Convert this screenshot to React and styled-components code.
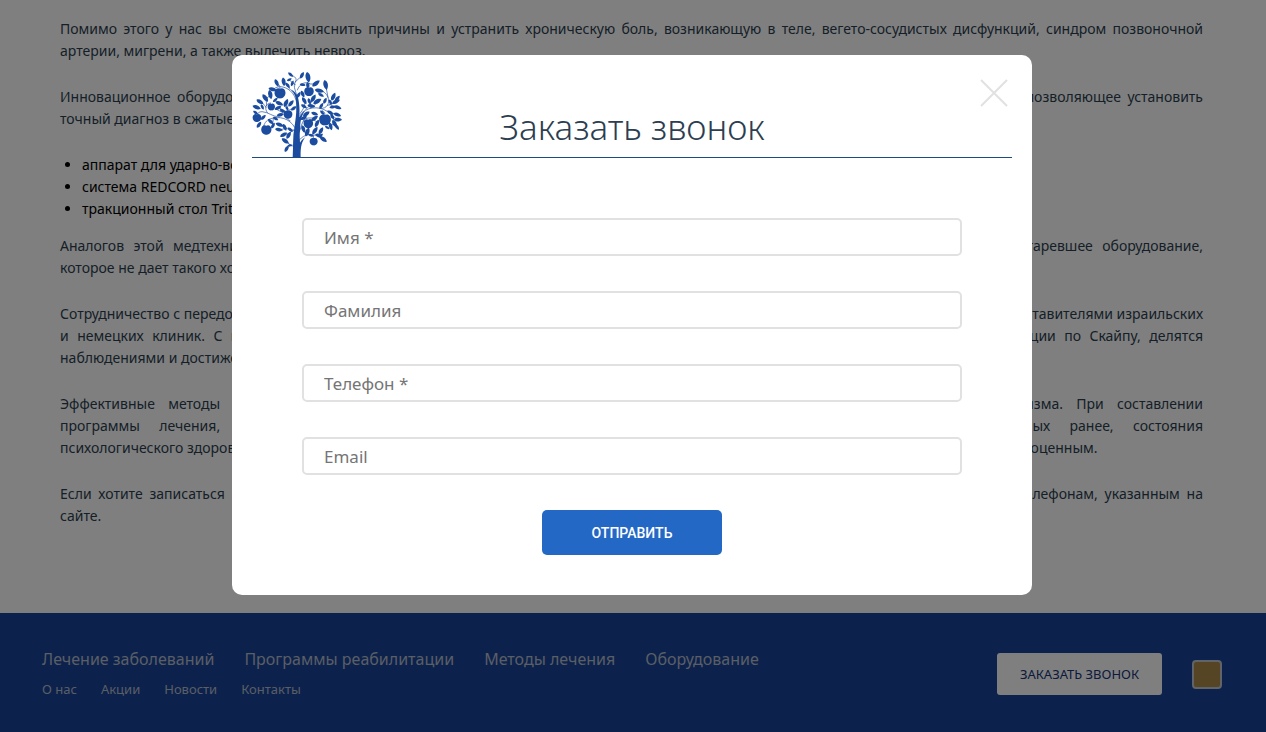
import styled, { createGlobalStyle } from "styled-components";

const GlobalStyle = createGlobalStyle`
	* {
		box-sizing: border-box;
	}

	body {
		margin: 0;
		background-color: white;
		font-family: "Noto Sans", "Open Sans", sans-serif;
	}
`;

const Page = styled.div`
	display: flex;
	flex-direction: column;
	height: 100vh;
	overflow: hidden;
`;

const Article = styled.main`
	flex: 1;
	display: flex;
	flex-direction: column;
	gap: 24px;
	padding: 18px 63px 0 60px;
	font-size: 14px;
	line-height: 22px;
	color: #2c3e50;
`;

const Paragraph = styled.p`
	margin: 0;
`;

const Line = styled.span`
	display: block;
	white-space: nowrap;
	text-align: justify;
	text-align-last: ${(props) => (props.$last ? "left" : "justify")};
`;

const ListBlock = styled.div`
	display: flex;
	flex-direction: column;
	gap: 15px;
`;

const List = styled.ul`
	margin: 0;
	padding-left: 22px;
	color: black;
`;

const Footer = styled.footer`
	display: flex;
	justify-content: space-between;
	align-items: flex-start;
	padding: 35px 44px 32px 42px;
	background-color: #18449a;
`;

const FooterNav = styled.nav`
	display: flex;
	flex-direction: column;
	gap: 8px;
`;

const LinkRow = styled.div`
	display: flex;
	gap: ${(props) => (props.$small ? "24px" : "30px")};
	font-size: ${(props) => (props.$small ? "13px" : "16px")};
	line-height: 22px;
`;

const FooterLink = styled.a`
	color: #b4bccb;
	text-decoration: none;
	white-space: nowrap;
`;

const FooterActions = styled.div`
	display: flex;
	align-items: center;
	gap: 30px;
	padding-top: 5px;
`;

const CallButton = styled.button`
	width: 165px;
	height: 42px;
	padding: 0;
	border: none;
	border-radius: 3px;
	background-color: white;
	color: #18357a;
	font-family: inherit;
	font-size: 13px;
	white-space: nowrap;
`;

const SquareButton = styled.button`
	width: 30px;
	height: 29px;
	padding: 0;
	border: 2px solid #c0c8d0;
	border-radius: 4px;
	background-color: #aa8b4a;
`;

const Overlay = styled.div`
	position: fixed;
	inset: 0;
	display: flex;
	justify-content: center;
	align-items: flex-start;
	padding: 55px 2px 0 0;
	background-color: rgba(0, 0, 0, 0.5);
`;

const Modal = styled.section`
	position: relative;
	width: 100%;
	max-width: 800px;
	padding: 17px 20px 40px;
	border-radius: 10px;
	background-color: white;
`;

const ModalHeader = styled.header`
	display: grid;
	grid-template-columns: 90px 1fr 90px;
	align-items: end;
	border-bottom: 1px solid #1f4a7d;
`;

const ModalTitle = styled.h2`
	margin: 0;
	padding-bottom: 6px;
	text-align: center;
	font-size: 35px;
	line-height: 48px;
	font-weight: 300;
	color: #2c3e50;
`;

const CloseButton = styled.button`
	position: absolute;
	top: 24px;
	right: 24px;
	display: flex;
	padding: 0;
	border: none;
	background: none;
`;

const Form = styled.form`
	display: flex;
	flex-direction: column;
	align-items: center;
	gap: 35px;
	padding: 60px 50px 0;
`;

const Field = styled.input`
	width: 100%;
	height: 38px;
	padding: 0 20px;
	border: 2px solid #e1e1e1;
	border-radius: 5px;
	font-family: inherit;
	font-size: 17px;

	&::placeholder {
		color: #757575;
	}
`;

const SubmitButton = styled.button`
	width: 180px;
	height: 45px;
	border: none;
	border-radius: 5px;
	background-color: #2468c6;
	color: white;
	font-family: Roboto, sans-serif;
	font-size: 14px;
	font-weight: 500;
`;

const TreeSvg = styled.svg`
	display: block;
	width: 90px;
	height: 85px;
`;

const apples = [
	[120, 102, 15],
	[207, 97, 13],
	[94, 143, 10],
	[144, 166, 12],
	[51, 176, 12],
	[79, 212, 14],
	[205, 193, 13],
	[255, 182, 16],
	[221, 247, 11],
];

// x, y, angle, length
const leaves = [
	[152, 46, 40, 20],
	[186, 48, -62, 22],
	[148, 61, -25, 16],
	[157, 72, -70, 18],
	[131, 67, 82, 26],
	[110, 71, 65, 24],
	[98, 90, 15, 26],
	[143, 78, 50, 20],
	[188, 76, 10, 18],
	[204, 54, 80, 32],
	[203, 78, 85, 20],
	[228, 72, -38, 28],
	[238, 94, 12, 28],
	[257, 77, 78, 30],
	[243, 107, 30, 20],
	[188, 104, 65, 22],
	[176, 107, -60, 20],
	[280, 112, -65, 26],
	[292, 118, -50, 22],
	[271, 128, 60, 18],
	[288, 127, -25, 26],
	[293, 144, 20, 24],
	[278, 143, -10, 20],
	[255, 124, -65, 20],
	[220, 117, -60, 26],
	[193, 124, 60, 24],
	[208, 126, 70, 20],
	[232, 126, -30, 28],
	[214, 140, 10, 24],
	[192, 141, 30, 20],
	[244, 140, -60, 20],
	[91, 106, 78, 28],
	[76, 116, 55, 28],
	[60, 127, 30, 24],
	[50, 144, 20, 26],
	[67, 143, 65, 18],
	[106, 122, -40, 18],
	[118, 132, 25, 26],
	[114, 146, -25, 22],
	[138, 131, -65, 26],
	[153, 132, -50, 24],
	[161, 147, -35, 20],
	[128, 155, 30, 20],
	[121, 166, -12, 22],
	[141, 147, 60, 16],
	[47, 160, 35, 18],
	[70, 174, -45, 20],
	[57, 196, -55, 22],
	[92, 187, 45, 22],
	[99, 199, -60, 20],
	[119, 196, 20, 26],
	[117, 211, 10, 24],
	[134, 204, 65, 22],
	[131, 226, -30, 24],
	[146, 228, -60, 24],
	[151, 211, 40, 20],
	[107, 178, 30, 18],
	[136, 245, 35, 26],
	[140, 268, -60, 22],
	[150, 258, -10, 16],
	[191, 176, -25, 22],
	[224, 177, -35, 24],
	[199, 164, -35, 24],
	[224, 163, 20, 22],
	[231, 192, -65, 24],
	[190, 209, 70, 24],
	[202, 218, -70, 28],
	[225, 214, -55, 26],
	[243, 214, -60, 24],
	[236, 228, 15, 22],
	[250, 240, 35, 26],
	[242, 229, -40, 18],
	[213, 228, 20, 18],
	[271, 160, 30, 22],
	[292, 166, 20, 24],
	[277, 172, 60, 20],
	[294, 181, 0, 24],
	[284, 193, 60, 26],
	[272, 201, 75, 24],
	[291, 203, 55, 20],
	[247, 160, 45, 18],
	[262, 205, 30, 16],
];

const branches = [
	"M171 150C174 108 148 84 122 82C110 82 104 86 100 91",
	"M172 118C168 92 158 84 166 68C172 57 165 52 155 48M166 68C174 58 180 56 186 50",
	"M172 92C180 70 198 66 212 74L225 74M207 84V72",
	"M166 76C158 72 154 66 148 62M150 90C142 80 136 72 131 68",
	"M120 88C122 78 114 74 110 70",
	"M178 168C198 142 236 140 258 154C276 164 284 178 284 196",
	"M240 147C262 150 270 130 264 114C258 100 248 94 238 94M264 114L258 82",
	"M262 138C274 138 280 130 288 127M268 134C278 142 286 144 292 144",
	"M180 162C190 150 196 140 194 124M198 150C210 140 214 128 220 117M210 146C222 142 228 134 232 126",
	"M164 204C148 176 118 170 92 178C78 182 72 194 70 204",
	"M118 173C96 172 86 158 66 157C56 157 52 162 50 170",
	"M82 160C72 146 78 132 92 131M78 144C72 134 66 130 60 127M80 138L78 118L91 108",
	"M150 184C138 180 134 170 142 156C146 144 140 140 138 131M142 156C150 150 156 148 161 147",
	"M134 154L118 146M128 160L110 150",
	"M163 214C148 206 136 208 117 211M160 212C150 222 142 226 131 226M140 208L134 198M100 177L98 196",
	"M180 212C186 190 192 176 206 176L224 176M206 182C214 178 224 182 231 188M190 186L199 166",
	"M178 242C194 222 214 224 236 230L250 240M204 226L202 212M216 226L226 214M234 230L243 216M220 238V228",
	"M162 262C152 254 146 262 140 268M154 259L138 246",
	"M268 158L292 166M278 170L294 181M284 188L272 201M255 170C256 160 252 156 247 154",
];

function Tree() {
	return (
		<TreeSvg viewBox="36 38 270 255" aria-hidden="true">
			<g fill="#1b4c9f">
				<path d="M158 294C160 262 158 232 163 205C167 180 171 154 168 124C167 108 160 98 150 90C166 96 174 108 176 124C180 150 178 158 178 174C181 166 188 159 196 154C182 170 181 188 180 214C178 230 180 242 180 250C184 243 190 238 196 234C184 248 181 268 182 294Z" />
				{apples.map(([x, y, r]) => (
					<path
						key={`${x}-${y}`}
						transform={`translate(${x} ${y}) scale(${r / 10})`}
						d="M0-9C3-12 11-10 11-1C11 6 5 11 0 10C-5 11-11 6-11-1C-11-10-3-12 0-9Z"
					/>
				))}
				{leaves.map(([x, y, angle, length]) => (
					<path
						key={`${x}-${y}`}
						transform={`translate(${x} ${y}) rotate(${angle}) scale(${length / 20})`}
						d="M-10 0C-6-6 4-6 10 0C4 6-6 6-10 0Z"
					/>
				))}
			</g>
			<g fill="none" stroke="#1b4c9f" strokeWidth="2" strokeLinecap="round">
				{branches.map((d) => (
					<path key={d} d={d} />
				))}
			</g>
		</TreeSvg>
	);
}

const paragraphs = [
	[
		"Помимо этого у нас вы сможете выяснить причины и устранить хроническую боль, возникающую в теле, вегето-сосудистых дисфункций, синдром позвоночной",
		"артерии, мигрени, а также вылечить невроз.",
	],
	[
		"Инновационное оборудование нашей клиники – это самая современная диагностическая и лечебная аппаратура экспертного уровня, позволяющее установить",
		"точный диагноз в сжатые сроки:",
	],
	[
		"Аналогов этой медтехники в городе нет. Многие центры до сих пор применяют для лечения своих пациентов зачастую уже устаревшее оборудование,",
		"которое не дает такого хорошего результата.",
	],
	[
		"Сотрудничество с передовыми зарубежными клиниками. Наши врачи также регулярно обмениваются опытом и знаниями с ведущими представителями израильских",
		"и немецких клиник. С их участием проходят международные семинары и обучение, врачи проводят совместные онлайн консультации по Скайпу, делятся",
		"наблюдениями и достижениями.",
	],
	[
		"Эффективные методы лечения подбираются врачами для каждого пациента с учетом индивидуальных особенностей организма. При составлении",
		"программы лечения, специалисты обязательно учитывают результаты обследования, наличие заболеваний, перенесенных ранее, состояния",
		"психологического здоровья пациента. Такой подход позволяет нам неизменно добиваться самых лучших результатов и делает лечение полноценным.",
	],
	[
		"Если хотите записаться на прием или получить консультацию наших опытных специалистов, оставьте заявку или позвоните нам по телефонам, указанным на",
		"сайте.",
	],
];

const devices = [
	"аппарат для ударно-волновой терапии;",
	"система REDCORD neurac;",
	"тракционный стол Triton.",
];

const services = [
	"Лечение заболеваний",
	"Программы реабилитации",
	"Методы лечения",
	"Оборудование",
];

const pages = ["О нас", "Акции", "Новости", "Контакты"];

const fields = [
	{ name: "name", type: "text", label: "Имя *" },
	{ name: "surname", type: "text", label: "Фамилия" },
	{ name: "phone", type: "tel", label: "Телефон *" },
	{ name: "email", type: "email", label: "Email" },
];

function TextBlock({ lines }) {
	return (
		<Paragraph>
			{lines.map((line, index) => (
				<Line key={line} $last={index === lines.length - 1}>
					{line}{" "}
				</Line>
			))}
		</Paragraph>
	);
}

function CallModal() {
	return (
		<Overlay>
			<Modal role="dialog" aria-modal="true" aria-labelledby="call-title">
				<ModalHeader>
					<Tree />
					<ModalTitle id="call-title">Заказать звонок</ModalTitle>
				</ModalHeader>
				<CloseButton type="button" aria-label="Закрыть">
					<svg width="28" height="28" viewBox="0 0 28 28">
						<path d="M1 1L27 27M27 1L1 27" stroke="#e1e1e1" strokeWidth="2" />
					</svg>
				</CloseButton>
				<Form onSubmit={(event) => event.preventDefault()}>
					{fields.map(({ name, type, label }) => (
						<Field
							key={name}
							name={name}
							type={type}
							placeholder={label}
							aria-label={label}
						/>
					))}
					<SubmitButton type="submit">ОТПРАВИТЬ</SubmitButton>
				</Form>
			</Modal>
		</Overlay>
	);
}

function App() {
	return (
		<>
			<GlobalStyle />
			<Page>
				<Article>
					<TextBlock lines={paragraphs[0]} />
					<TextBlock lines={paragraphs[1]} />
					<ListBlock>
						<List>
							{devices.map((device) => (
								<li key={device}>{device}</li>
							))}
						</List>
						<TextBlock lines={paragraphs[2]} />
					</ListBlock>
					{paragraphs.slice(3).map((lines) => (
						<TextBlock key={lines[0]} lines={lines} />
					))}
				</Article>
				<Footer>
					<FooterNav>
						<LinkRow>
							{services.map((title) => (
								<FooterLink key={title} href="#">
									{title}
								</FooterLink>
							))}
						</LinkRow>
						<LinkRow $small>
							{pages.map((title) => (
								<FooterLink key={title} href="#">
									{title}
								</FooterLink>
							))}
						</LinkRow>
					</FooterNav>
					<FooterActions>
						<CallButton type="button">ЗАКАЗАТЬ ЗВОНОК</CallButton>
						<SquareButton type="button" aria-label="Наверх" />
					</FooterActions>
				</Footer>
			</Page>
			<CallModal />
		</>
	);
}

export default App;
